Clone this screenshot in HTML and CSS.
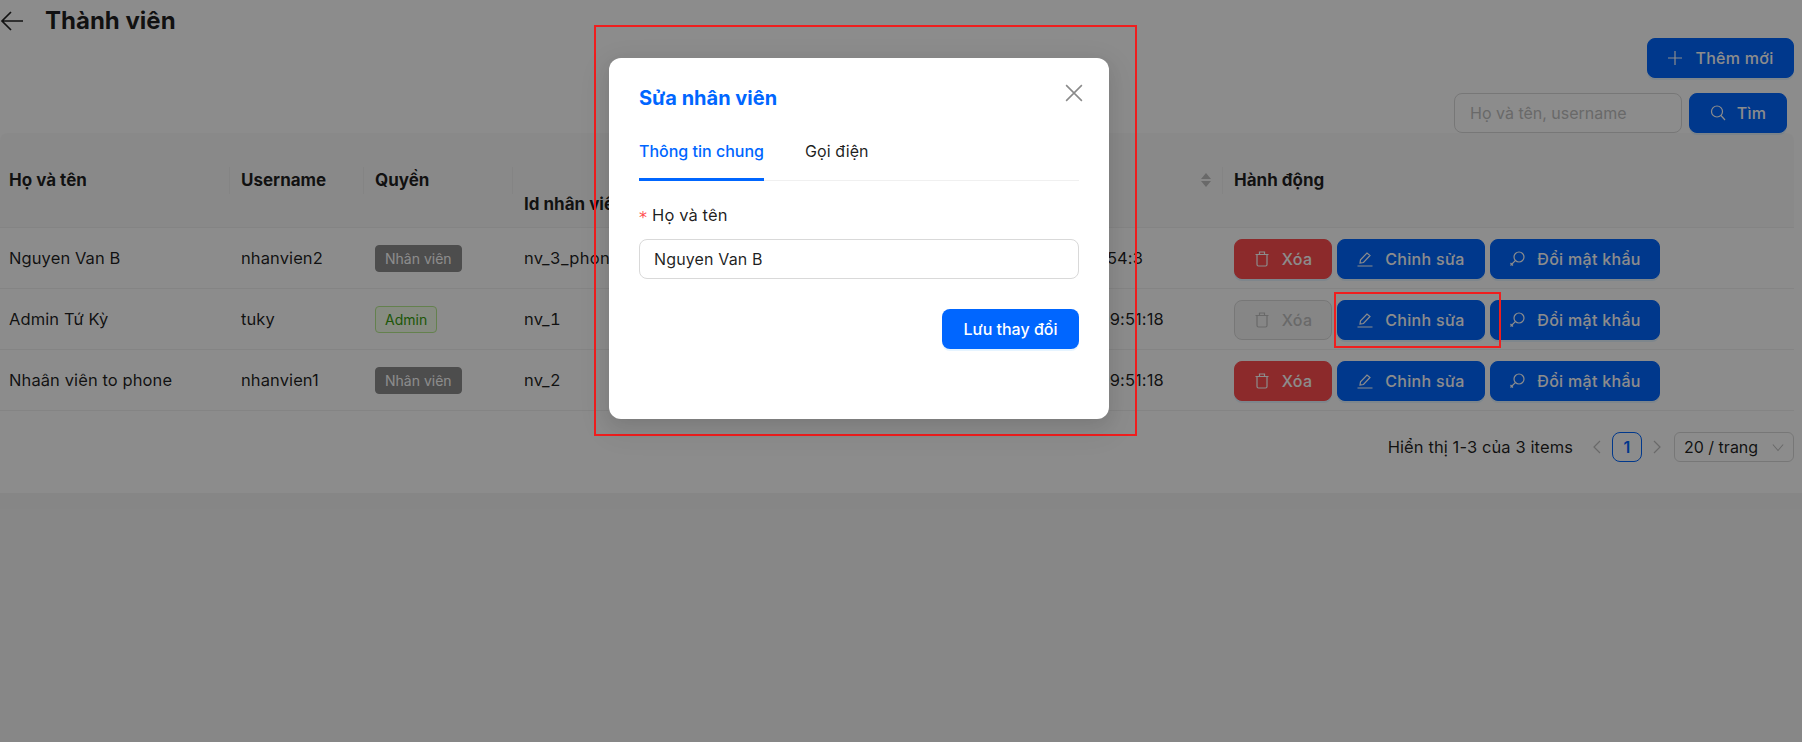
FILE: index.html
```html
<!DOCTYPE html>
<html lang="vi">
<head>
<meta charset="utf-8">
<title>Thành viên</title>
<link rel="stylesheet" href="styles.css">
</head>
<body>
<div class="page">
  <header class="head">
    <svg class="back" viewBox="0 0 24 24"><path d="M23 12H2M11 3l-9 9 9 9"/></svg>
    <h1>Thành viên</h1>
  </header>
  <div class="toolbar">
    <button class="btn add"><svg class="ic" viewBox="0 0 16 16"><path d="M8 1v14M1 8h14"/></svg>Thêm mới</button>
  </div>
  <div class="searchbar">
    <input class="search" placeholder="Họ và tên, username">
    <button class="btn find"><svg class="ic" viewBox="0 0 16 16"><circle cx="7" cy="6.5" r="5.5"/><path d="M11 10.5l4 4.5"/></svg>Tìm</button>
  </div>
  <div class="table">
    <div class="row thead">
      <div class="th"><span>Họ và tên</span></div>
      <div class="th"><span>Username</span></div>
      <div class="th"><span>Quyền</span></div>
      <div class="th low"><span>Id nhân viên</span></div>
      <div class="th"><span>Ngày tạo</span><svg class="sort" viewBox="0 0 12 16"><path d="M6 1l5 6H1zM6 15l5-6H1z"/></svg></div>
      <div class="th"><span>Hành động</span></div>
    </div>
    <div class="row">
      <div class="td">Nguyen Van B</div>
      <div class="td">nhanvien2</div>
      <div class="td"><span class="tag staff">Nhân viên</span></div>
      <div class="td num">nv_3_phone</div>
      <div class="td time">2024-5-2 09:54:3</div>
      <div class="td acts">
        <button class="btn del"><svg class="ic" viewBox="0 0 16 16"><path d="M1.5 3.5h13M5.5 3.5V1h5v2.5M3 3.5V13.5q0 1.5 1.5 1.5h7q1.5 0 1.5-1.5V3.5"/></svg>Xóa</button>
        <button class="btn"><svg class="ic" viewBox="0 0 16 16"><path d="M.5 15h15M3 12l.5-3.2L10 2l3 2.5-6.5 7z"/></svg>Chỉnh sửa</button>
        <button class="btn"><svg class="ic" viewBox="0 0 16 16"><circle cx="10" cy="6" r="5"/><path d="M6.3 9.7L1.5 14.5M1.5 12l2.5 2.5"/></svg>Đổi mật khẩu</button>
      </div>
    </div>
    <div class="row">
      <div class="td">Admin Tứ Kỳ</div>
      <div class="td">tuky</div>
      <div class="td"><span class="tag admin">Admin</span></div>
      <div class="td num">nv_1</div>
      <div class="td time">2024-05-19 09:51:18</div>
      <div class="td acts">
        <button class="btn off"><svg class="ic" viewBox="0 0 16 16"><path d="M1.5 3.5h13M5.5 3.5V1h5v2.5M3 3.5V13.5q0 1.5 1.5 1.5h7q1.5 0 1.5-1.5V3.5"/></svg>Xóa</button>
        <button class="btn"><svg class="ic" viewBox="0 0 16 16"><path d="M.5 15h15M3 12l.5-3.2L10 2l3 2.5-6.5 7z"/></svg>Chỉnh sửa</button>
        <button class="btn"><svg class="ic" viewBox="0 0 16 16"><circle cx="10" cy="6" r="5"/><path d="M6.3 9.7L1.5 14.5M1.5 12l2.5 2.5"/></svg>Đổi mật khẩu</button>
      </div>
    </div>
    <div class="row">
      <div class="td">Nhaân viên to phone</div>
      <div class="td">nhanvien1</div>
      <div class="td"><span class="tag staff">Nhân viên</span></div>
      <div class="td num">nv_2</div>
      <div class="td time">2024-05-19 09:51:18</div>
      <div class="td acts">
        <button class="btn del"><svg class="ic" viewBox="0 0 16 16"><path d="M1.5 3.5h13M5.5 3.5V1h5v2.5M3 3.5V13.5q0 1.5 1.5 1.5h7q1.5 0 1.5-1.5V3.5"/></svg>Xóa</button>
        <button class="btn"><svg class="ic" viewBox="0 0 16 16"><path d="M.5 15h15M3 12l.5-3.2L10 2l3 2.5-6.5 7z"/></svg>Chỉnh sửa</button>
        <button class="btn"><svg class="ic" viewBox="0 0 16 16"><circle cx="10" cy="6" r="5"/><path d="M6.3 9.7L1.5 14.5M1.5 12l2.5 2.5"/></svg>Đổi mật khẩu</button>
      </div>
    </div>
  </div>
  <div class="pager">
    <span class="total">Hiển thị 1-3 của 3 items</span>
    <svg class="chev" viewBox="0 0 10 16"><path d="M8 2L2 8l6 6"/></svg>
    <span class="cur">1</span>
    <svg class="chev" viewBox="0 0 10 16"><path d="M2 2l6 6-6 6"/></svg>
    <span class="size">20 / trang<svg class="down" viewBox="0 0 14 10"><path d="M1 1.5l6 7 6-7"/></svg></span>
  </div>
</div>
<div class="mask"></div>
<div class="mark mark-modal"></div>
<div class="mark mark-edit"></div>
<section class="modal">
  <button class="close"><svg viewBox="0 0 16 16"><path d="M1 1l14 14M15 1L1 15"/></svg></button>
  <h2>Sửa nhân viên</h2>
  <nav class="tabs">
    <span class="tab active">Thông tin chung</span>
    <span class="tab">Gọi điện</span>
  </nav>
  <label class="label"><i>*</i>Họ và tên</label>
  <input class="field" value="Nguyen Van B">
  <div class="foot"><button class="save">Lưu thay đổi</button></div>
</section>
</body>
</html>
```
FILE: styles.css
```css
* { box-sizing: border-box; }
html, body { margin: 0; height: 100%; }
body { position: relative; height: 742px; overflow: hidden; background: #f5f5f5; font-family: Inter, "Liberation Sans", sans-serif; font-size: 16px; color: rgba(0,0,0,.88); }
button, input { font: inherit; }
.page { height: 493px; background: #fff; }
.head { height: 38px; display: flex; align-items: center; padding-top: 3px; }
.back { width: 24px; height: 24px; margin-left: 0; fill: none; stroke: #222; stroke-width: 1.7; }
h1 { margin: 0 0 0 21px; font-size: 24px; font-weight: 700; line-height: 36px; }
.toolbar { height: 55px; display: flex; justify-content: flex-end; padding-right: 8px; }
.searchbar { height: 40px; display: flex; justify-content: flex-end; gap: 7px; padding-right: 15px; }
.btn { height: 40px; display: inline-flex; align-items: center; justify-content: center; gap: 12px; padding: 0; border: 1px solid #0066ff; border-radius: 8px; background: #0066ff; color: #fff; font-weight: 500; letter-spacing: .3px; white-space: nowrap; box-shadow: 0 2px 0 rgba(5,145,255,.1); }
.ic { width: 16px; height: 16px; fill: none; stroke: currentColor; stroke-width: 1.2; flex: none; }
.add { width: 147px; }
.find { width: 98px; gap: 11px; }
.search { width: 228px; height: 40px; border: 1px solid #d9d9d9; border-radius: 8px; padding: 0 15px; outline: 0; background: #fff; }
.search::placeholder { color: #bfbfbf; }
.table { width: 1794px; }
.row { display: grid; grid-template-columns: 230px 134px 149px 200px 510px 571px; height: 61px; border-bottom: 1px solid #f0f0f0; align-items: center; }
.thead { height: 95px; background: #fafafa; border-radius: 8px 8px 0 0; font-size: 17px; font-weight: 700; }
.th { position: relative; height: 27px; display: flex; align-items: center; padding-left: 11px; justify-content: space-between; padding-right: 11px; }
.th:first-child { padding-left: 9px; }
.th:not(:last-child)::after { content: ""; position: absolute; right: 0; top: 0; height: 27px; width: 1px; background: #f0f0f0; }
.th.low::after { display: none; }
.th.low span { position: relative; top: 24px; }
.sort { width: 12px; height: 16px; fill: #bfbfbf; }
.th span { white-space: nowrap; }
.td { padding-left: 11px; font-size: 16.5px; white-space: nowrap; overflow: hidden; letter-spacing: .1px; }
.td:first-child { padding-left: 9px; }
.num { font-variant-numeric: tabular-nums; letter-spacing: .3px; }
.time { padding-left: 287px; }
.acts { display: flex; gap: 5px; margin-top: 2px; overflow: visible; font-size: 16px; }
.acts .btn:nth-child(1) { width: 98px; }
.acts .btn:nth-child(2) { width: 148px; }
.acts .btn:nth-child(3) { width: 170px; }
.del { background: #ff4d4f; border-color: #ff4d4f; }
.btn.off { background: #f5f5f5; border-color: #d9d9d9; color: #bfbfbf; box-shadow: none; }
.tag { display: inline-block; height: 27px; line-height: 25px; padding: 0 9px; border: 1px solid; border-radius: 4px; font-size: 14px; letter-spacing: 0; }
.staff { background: #8c8c8c; border-color: #8c8c8c; color: #fff; }
.admin { background: #f6ffed; border-color: #b7eb8f; color: #389e0d; }
.pager { height: 72px; width: 1794px; display: flex; align-items: center; justify-content: flex-end; }
.total { margin-right: 19px; font-size: 16.5px; letter-spacing: .1px; }
.chev { width: 10px; height: 16px; fill: none; stroke: #bfbfbf; stroke-width: 1.2; }
.cur { width: 30px; height: 30px; margin: 0 10px; border: 1px solid #0066ff; border-radius: 8px; background: #fff; color: #0066ff; font-weight: 600; display: flex; align-items: center; justify-content: center; }
.size { width: 120px; height: 30px; margin-left: 12px; border: 1px solid #d9d9d9; border-radius: 6px; padding: 0 9px; display: flex; align-items: center; justify-content: space-between; }
.down { width: 12px; height: 9px; fill: none; stroke: #bfbfbf; stroke-width: 1.2; }
.mask { position: absolute; inset: 0; background: rgba(0,0,0,.45); }
.mark { position: absolute; border: 2px solid #f01e1e; }
.mark-modal { left: 594px; top: 25px; width: 543px; height: 411px; }
.mark-edit { left: 1334px; top: 292px; width: 167px; height: 56px; }
.modal { position: absolute; left: 609px; top: 58px; width: 500px; height: 361px; padding: 30px; background: #fff; border-radius: 12px; box-shadow: 0 6px 16px rgba(0,0,0,.08), 0 9px 28px 8px rgba(0,0,0,.05); }
h2 { margin: 0; font-size: 20px; font-weight: 700; line-height: 20px; color: #0066ff; }
.close { position: absolute; left: 456px; top: 26px; width: 18px; height: 18px; padding: 0; border: 0; background: none; }
.close svg { display: block; width: 18px; height: 18px; fill: none; stroke: #8a8a8a; stroke-width: 1.4; }
.tabs { display: flex; gap: 41px; margin-top: 30px; height: 43px; border-bottom: 1px solid #f0f0f0; }
.tab { height: 43px; line-height: 26px; padding-top: 0; letter-spacing: .1px; }
.active { color: #0066ff; font-weight: 500; letter-spacing: 0; border-bottom: 3px solid #0066ff; }
.label { display: block; height: 24px; margin-top: 22px; font-size: 16.5px; line-height: 24px; letter-spacing: .1px; }
.label i { color: #ff4d4f; font-style: normal; font-family: "DejaVu Sans", sans-serif; font-size: 16px; line-height: 1; margin-right: 5px; vertical-align: -2px; }
.field { display: block; width: 440px; height: 40px; margin-top: 12px; padding: 0 14px; border: 1px solid #d9d9d9; border-radius: 8px; outline: 0; color: rgba(0,0,0,.88); letter-spacing: .15px; }
.foot { display: flex; justify-content: flex-end; margin-top: 30px; }
.save { width: 137px; height: 40px; border: 0; border-radius: 8px; background: #0066ff; color: #fff; font-weight: 500; box-shadow: 0 2px 0 rgba(5,145,255,.1); }
```
